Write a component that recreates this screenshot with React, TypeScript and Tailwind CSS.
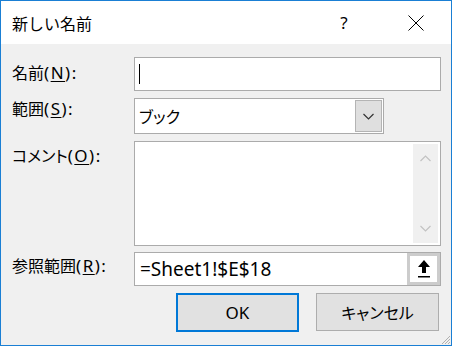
import React from "react";

const jp = "font-['Yu_Gothic_UI','Noto_Sans_CJK_JP',sans-serif]";
const latin = "font-['Noto_Sans',sans-serif]";

// label with underlined access key
const Label = ({ text, k, pt }: { text: string; k: string; pt: string }) => (
  <div className={`w-[122px] shrink-0 text-[16px] leading-[20px] text-[#000] [font-feature-settings:'palt'] ${pt}`}>
    {text}
    <span className={`${latin} text-[17px] tracking-[1.5px]`}>
      (<span className="underline underline-offset-2">{k}</span>):
    </span>
  </div>
);

const Chevron = ({ up, color }: { up?: boolean; color: string }) => (
  <svg width="11" height="7" viewBox="0 0 11 7">
    <path d={up ? "M0.5 6 L5.5 1 L10.5 6" : "M0.5 1 L5.5 6 L10.5 1"} fill="none" stroke={color} strokeWidth="1.2" />
  </svg>
);

export default function App() {
  return (
    <div className={`w-[452px] h-[346px] border border-[#1a7fd4] bg-[#f0f0f0] flex flex-col ${jp}`}>
      {/* title bar */}
      <div className="h-[43px] bg-white flex items-center pl-[11px] text-[16px] text-black">
        <span className="flex-1">新しい名前</span>
        <span className={`w-[20px] text-center mr-[54px] ${latin} text-[17px]`}>?</span>
        <svg width="16" height="16" viewBox="0 0 16 16" className="mr-[27px]">
          <path d="M0.5 0.5 L15.5 15.5 M15.5 0.5 L0.5 15.5" stroke="#000" strokeWidth="1" />
        </svg>
      </div>

      <div className="flex flex-col pl-[11px] pt-[13px]">
        {/* name */}
        <div className="flex">
          <Label text="名前" k="N" pt="pt-[5px]" />
          <div className="w-[307px] h-[34px] bg-white border border-[#ababab] flex items-center pl-[4px]">
            <div className="w-[1px] h-[20px] bg-black" />
          </div>
        </div>

        {/* scope */}
        <div className="flex mt-[7px]">
          <Label text="範囲" k="S" pt="pt-0" />
          <div className="w-[250px] h-[36px] bg-white border border-[#ababab] flex items-center">
            <span className="flex-1 pl-[4px] text-[16px] leading-[20px] [font-feature-settings:'palt']">ブック</span>
            <div className="w-[27px] h-[32px] mr-[1px] bg-[#dfdfdf] border border-[#b4b4b4] flex items-center justify-center">
              <Chevron color="#333" />
            </div>
          </div>
        </div>

        {/* comment */}
        <div className="flex mt-[7px]">
          <Label text="コメント" k="O" pt="pt-[4px]" />
          <div className="w-[307px] h-[105px] bg-white border border-[#ababab] flex justify-end pr-[2px] py-[2px]">
            <div className="w-[25px] h-full bg-[#f0f0f0] flex flex-col items-center justify-between py-[11px]">
              <Chevron up color="#c2c2c2" />
              <Chevron color="#c2c2c2" />
            </div>
          </div>
        </div>

        {/* reference */}
        <div className="flex mt-[6px]">
          <Label text="参照範囲" k="R" pt="pt-[3px]" />
          <div className="w-[307px] h-[34px] bg-white border border-[#ababab] flex items-center">
            <span className={`flex-1 pl-[5px] ${latin} text-[19px] leading-[22px]`}>=Sheet1!$E$18</span>
            <div className="w-[33px] h-[32px] border-[3px] border-[#cccccc] bg-white flex items-center justify-center">
              <svg width="14" height="20" viewBox="0 0 14 20">
                <path d="M7 1 L13 8 L9 8 L9 14 L5 14 L5 8 L1 8 Z" fill="#000" />
                <rect x="1" y="17" width="12" height="1.5" fill="#000" />
              </svg>
            </div>
          </div>
        </div>

        {/* buttons */}
        <div className="flex mt-[7px] pl-[164px] gap-[17px]">
          <button className={`w-[123px] h-[39px] bg-[#e1e1e1] border-2 border-[#0078d7] text-[17px] ${latin}`}>
            OK
          </button>
          <button className="w-[123px] h-[38px] bg-[#e1e1e1] border border-[#adadad] text-[16px] [font-feature-settings:'palt']">
            キャンセル
          </button>
        </div>
      </div>

      {/* resize grip */}
      <div className="relative flex-1">
        <svg width="11" height="11" viewBox="0 0 11 11" className="absolute right-0 bottom-0">
          <path d="M10 2 L2 10 M10 5 L5 10 M10 8 L8 10" stroke="#b0b0b0" strokeWidth="1" />
        </svg>
      </div>
    </div>
  );
}
